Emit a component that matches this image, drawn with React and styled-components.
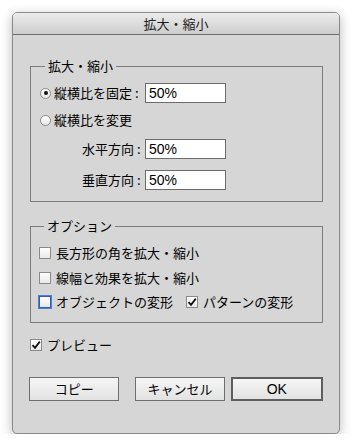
import React from "react";
import styled, { createGlobalStyle } from "styled-components";

const GlobalStyle = createGlobalStyle`
    html, body {
        margin: 0;
        padding: 0;
        background: #ffffff;
    }
    body {
        font-family: "Noto Sans CJK JP", "Liberation Sans", sans-serif;
        font-size: 13px;
        color: #000;
    }
`;

const Window = styled.div`
    margin: 12px 0 0 12px;
    width: 328px;
    height: 422px;
    box-sizing: border-box;
    border: 1px solid #8a8a8a;
    border-radius: 5px;
    background: #d6d6d6;
    box-shadow: 0 3px 12px rgba(0, 0, 0, 0.28);
    overflow: hidden;
    display: flex;
    flex-direction: column;
`;

const TitleBar = styled.div`
    height: 21px;
    border-bottom: 1px solid #6e6e6e;
    background: linear-gradient(#ececec, #cdcdcd);
    display: flex;
    align-items: center;
    justify-content: center;
    font-size: 13px;
    line-height: 16px;
    color: #1e1e1e;
`;

const Body = styled.div`
    padding: 23px 16px 0 17px;
    display: flex;
    flex-direction: column;
`;

const Group = styled.fieldset`
    margin: ${(p) => (p.$first ? "0" : "16px 0 0 0")};
    padding: ${(p) => p.$pad};
    border: 1px solid #7c7c7c;
    min-width: 0;
    display: flex;
    flex-direction: column;
`;

const Legend = styled.legend`
    margin-left: 5px;
    padding: 0 3px;
    font-size: 13px;
    line-height: 16px;
`;

const Row = styled.div`
    display: flex;
    align-items: center;
    height: ${(p) => p.$h || 20}px;
    margin-top: ${(p) => p.$mt || 0}px;
    line-height: 16px;
    white-space: nowrap;
`;

const RowLabel = styled.div`
    width: 105px;
    box-sizing: border-box;
    padding-left: ${(p) => p.$indent || 0}px;
    display: flex;
    align-items: center;
`;

const Radio = styled.span`
    width: 11px;
    height: 11px;
    box-sizing: border-box;
    border-radius: 50%;
    border: 1px solid #8a8a8a;
    background: linear-gradient(#ffffff, #e6e6e6);
    margin-right: 3px;
    display: flex;
    align-items: center;
    justify-content: center;
    flex-shrink: 0;
    &::after {
        content: "";
        width: 4px;
        height: 4px;
        border-radius: 50%;
        background: #111;
        display: ${(p) => (p.$on ? "block" : "none")};
    }
`;

const Field = styled.div`
    width: 81px;
    height: 20px;
    box-sizing: border-box;
    border: 1px solid #6c6c6c;
    background: #fff;
    padding-left: 3px;
    font-family: "Liberation Sans", Arial, sans-serif;
    font-size: 14px;
    line-height: 18px;
    color: #000;
`;

const Box = styled.span`
    width: 12px;
    height: 12px;
    box-sizing: border-box;
    border: 1px solid ${(p) => (p.$focus ? "#2a5fcb" : "#8a8a8a")};
    box-shadow: ${(p) => (p.$focus ? "0 0 0 1px rgba(42, 95, 203, 0.75)" : "none")};
    background: linear-gradient(#ffffff, #e8e8e8);
    margin-right: 5px;
    display: flex;
    align-items: center;
    justify-content: center;
    flex-shrink: 0;
`;

const Spacer = styled.span`
    width: ${(p) => p.$w}px;
    flex-shrink: 0;
`;

const Buttons = styled.div`
    display: flex;
    margin: 24px 0 0 -1px;
`;

const Button = styled.div`
    width: ${(p) => p.$w || 90}px;
    height: 24px;
    margin-left: ${(p) => p.$ml || 0}px;
    box-sizing: border-box;
    border: ${(p) => (p.$default ? "2px solid #5e5e5e" : "1px solid #6e6e6e")};
    background: linear-gradient(#f6f6f6, #e2e2e2);
    display: flex;
    align-items: center;
    justify-content: center;
    font-size: 13px;
    line-height: 16px;
    font-family: ${(p) => (p.$latin ? '"Liberation Sans", Arial, sans-serif' : "inherit")};
    ${(p) => p.$latin && "font-size: 14px;"}
`;

const Check = () => (
    <svg width="10" height="10" viewBox="0 0 10 10">
        <path d="M1.5 5.2 L4 7.8 L8.8 1.6" fill="none" stroke="#111" strokeWidth="1.8" />
    </svg>
);

const CheckBox = ({ on, focus }) => <Box $focus={focus}>{on && <Check />}</Box>;

const App = () => {
    return (
        <>
            <GlobalStyle />
            <Window>
                <TitleBar>拡大・縮小</TitleBar>
                <Body>
                    <Group $first $pad="9px 10px 11px 9px">
                        <Legend>拡大・縮小</Legend>
                        <Row>
                            <RowLabel>
                                <Radio $on />
                                縦横比を固定 :
                            </RowLabel>
                            <Field>50%</Field>
                        </Row>
                        <Row $mt={7}>
                            <RowLabel>
                                <Radio />
                                縦横比を変更
                            </RowLabel>
                        </Row>
                        <Row $mt={9}>
                            <RowLabel $indent={42}>水平方向 :</RowLabel>
                            <Field>50%</Field>
                        </Row>
                        <Row $mt={11}>
                            <RowLabel $indent={42}>垂直方向 :</RowLabel>
                            <Field>50%</Field>
                        </Row>
                    </Group>
                    <Group $pad="11px 10px 12px 8px">
                        <Legend>オプション</Legend>
                        <Row $h={16}>
                            <CheckBox />
                            長方形の角を拡大・縮小
                        </Row>
                        <Row $h={16} $mt={9}>
                            <CheckBox />
                            線幅と効果を拡大・縮小
                        </Row>
                        <Row $h={16} $mt={8}>
                            <CheckBox focus />
                            オブジェクトの変形
                            <Spacer $w={13} />
                            <CheckBox on />
                            パターンの変形
                        </Row>
                    </Group>
                    <Row $h={16} $mt={14}>
                        <CheckBox on />
                        プレビュー
                    </Row>
                    <Buttons>
                        <Button $w={91}>コピー</Button>
                        <Button $ml={16}>キャンセル</Button>
                        <Button $ml={6} $w={93} $default $latin>OK</Button>
                    </Buttons>
                </Body>
            </Window>
        </>
    );
};

export default App;
